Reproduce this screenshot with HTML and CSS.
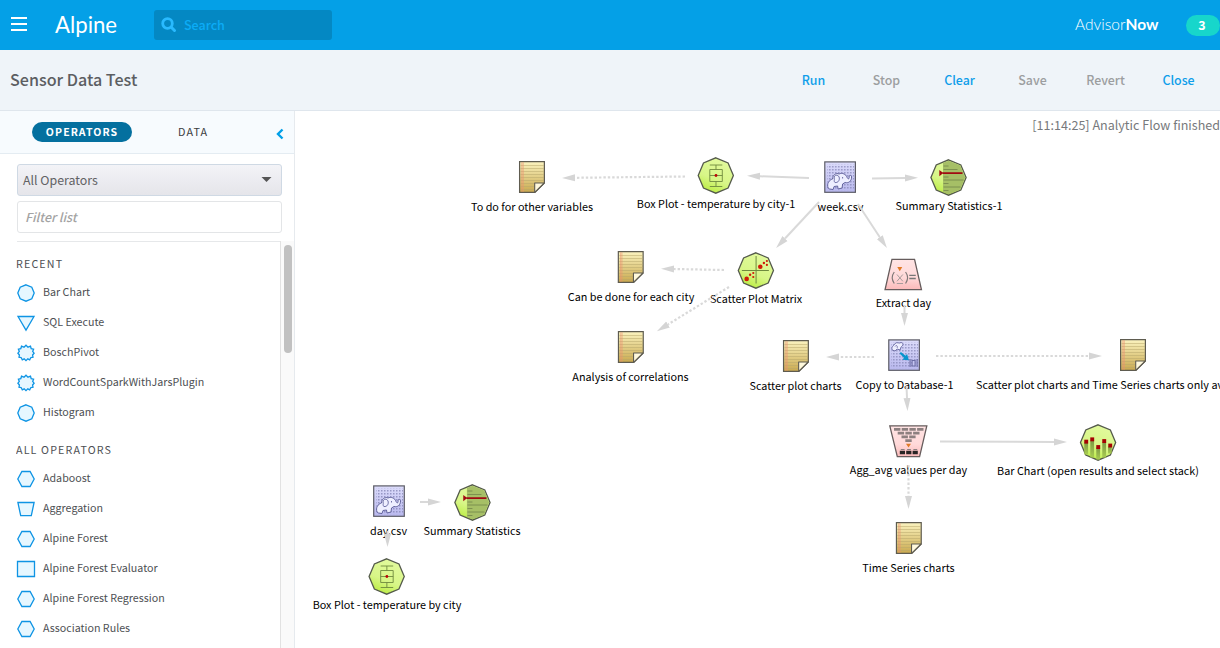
FILE: index.html
```html
<!DOCTYPE html>
<html lang="en">
<head>
<meta charset="utf-8">
<title>Sensor Data Test - Alpine</title>
<link rel="stylesheet" href="styles.css">
</head>
<body>
<svg class="defs" width="0" height="0" aria-hidden="true">
  <defs>
    <linearGradient id="gNote" x1="0" y1="0" x2="0" y2="1"><stop offset="0" stop-color="#fbf3bf"/><stop offset="1" stop-color="#c9a94f"/></linearGradient>
    <linearGradient id="gGreen" x1="0.7" y1="0" x2="0.3" y2="1"><stop offset="0" stop-color="#e2fa9e"/><stop offset=".6" stop-color="#d8f688"/><stop offset="1" stop-color="#b9ec3e"/></linearGradient>
    <linearGradient id="gBlue" x1="0" y1="0" x2="0" y2="1"><stop offset="0" stop-color="#dcdcfb"/><stop offset="1" stop-color="#b9b8ee"/></linearGradient>
    <linearGradient id="gPink" x1="0" y1="0" x2="0" y2="1"><stop offset="0" stop-color="#ffe4e4"/><stop offset=".6" stop-color="#ffd9d9"/><stop offset="1" stop-color="#fbb9b9"/></linearGradient>
    <linearGradient id="gBar" x1="0" y1="0" x2="0" y2="1"><stop offset="0" stop-color="#7d9a45"/><stop offset="1" stop-color="#a8cc50"/></linearGradient>
    <pattern id="dots" width="3" height="3" patternUnits="userSpaceOnUse"><rect width="1.5" height="1.5" fill="#8384b4"/></pattern>
    <marker id="head" markerUnits="userSpaceOnUse" markerWidth="13" markerHeight="8" refX="0" refY="4" orient="auto"><path d="M0 .5L13 4L0 7.5Z" fill="#d5d5d5"/></marker>
  </defs>
  <symbol id="octagon" viewBox="0 0 40 40"><path d="M20 2.3L32.3 7.4L37.6 20L32.3 32.5L20 37.7L7.7 32.5L2.4 20L7.7 7.4Z" fill="url(#gGreen)" stroke="#555b4c" stroke-width="1.3"/></symbol>
  <symbol id="note" viewBox="0 0 40 40">
    <path d="M7.6 4.6H32.4V26L23 35.4H7.6Z" fill="url(#gNote)" stroke="#5f5c50" stroke-width="1.2"/>
    <path d="M8.5 8.5H31.8M8.5 11.5H31.8M8.5 14.5H31.8M8.5 17.5H31.8M8.5 20.5H31.8M8.5 23.5H31.8M8.5 26.5H22M8.5 29.5H22M8.5 32.5H22" stroke="#b7a76b" stroke-width=".5"/>
    <path d="M9.9 5.2V34.8M11.2 5.2V34.8" stroke="#ee9070" stroke-width=".6"/>
    <path d="M22.7 35.3V26H32.3Z" fill="#fff9dc" stroke="#5f5c50" stroke-width="1.1" stroke-linejoin="round"/>
  </symbol>
  <symbol id="boxplot" viewBox="0 0 40 40"><use href="#octagon"/>
    <path d="M14 9.5H26.500M20.200 9.500V14M14 14H26.500V26H14ZM14 20H26.500M20.200 26V31M14 31H26.500" fill="none" stroke="#6f8a3e" stroke-width=".9"/><circle cx="20.2" cy="20" r="1.4" fill="#b90707"/></symbol>
  <symbol id="summary" viewBox="0 0 40 40"><use href="#octagon"/>
    <path d="M14.500 5.500L20 3.200L31.800 8L36.600 20L31.800 32L20 36.800L14.500 34.500Z" fill="#a6bf66"/>
    <path d="M15 8.500H20M15 12H29M15 19.500H20M15 22.500H35M15 26H20M15 29.500H32M15 33H20" stroke="#728549" stroke-width=".8"/>
    <path d="M14 15.600H34" stroke="#a10b12" stroke-width="1.900"/><path d="M10.800 12.500L14.800 15.600L10.800 18.700Z" fill="#a10b12"/></symbol>
  <symbol id="scatter" viewBox="0 0 40 40"><use href="#octagon"/>
    <path d="M20.200 5.500V33M6 20H33" stroke="#6f8a3e" stroke-width="1"/>
    <g fill="#cf1c08"><circle cx="24.4" cy="16.2" r="2.3"/><circle cx="28" cy="12.500" r="1.2"/><circle cx="31" cy="10.500" r="1.1"/><circle cx="31" cy="14.4" r="1.1"/><circle cx="10.8" cy="28.4" r="2.3"/><circle cx="14.2" cy="24.3" r="1.2"/><circle cx="17.4" cy="22.500" r="1.1"/><circle cx="17.4" cy="26.500" r="1.1"/></g></symbol>
  <symbol id="bars" viewBox="0 0 40 40"><use href="#octagon"/>
    <g fill="url(#gBar)"><rect x="6.2" y="20" width="3.8" height="12"/><rect x="12.2" y="18" width="3.8" height="17"/><rect x="18.2" y="25" width="3.8" height="12"/><rect x="24.2" y="20" width="3.8" height="15"/><rect x="30" y="24" width="3.6" height="7"/></g>
    <g fill="#a50303"><rect x="6.2" y="17.2" width="3.9" height="3.9"/><rect x="12.2" y="14.9" width="3.9" height="3.9"/><rect x="18.2" y="22.6" width="3.9" height="3.9"/><rect x="24.2" y="16.6" width="3.9" height="3.9"/><rect x="30.2" y="21.1" width="3.9" height="3.9"/></g></symbol>
  <symbol id="hadoop" viewBox="0 0 40 40">
    <rect x="4.7" y="4.9" width="30.6" height="30.4" fill="url(#gBlue)" stroke="#5c5c66" stroke-width="1.2"/><rect x="7" y="7.500" width="27" height="25.600" fill="url(#dots)" opacity=".75"/>
    <path d="M8 31C6.500 26.500 9 23 12.500 22C12.500 18 16 15.500 19 17C22 15.500 26 17 27 20.500C28 22.500 29.500 22 29 20C28.500 18 31.500 17.500 31.500 20C31.500 24 28.500 26.500 25 25.500L22.500 27L22 31L18 32L17.500 29L14 29.500L13 32.500L9.500 32Z" fill="#eeefff" stroke="#62639d" stroke-width="1"/>
    <path d="M14 21C14 17.500 18 17.500 19 20C20 23 18 26 15 25.500C13 24.500 15 23 14 21ZM22.500 20V21.500" fill="none" stroke="#62639d" stroke-width=".9"/></symbol>
  <symbol id="copydb" viewBox="0 0 40 40">
    <rect x="4.7" y="4.9" width="30.6" height="30.4" fill="url(#gBlue)" stroke="#5c5c66" stroke-width="1.2"/><rect x="7" y="7.500" width="27" height="25.600" fill="url(#dots)" opacity=".75"/>
    <path d="M8 15C7 11 10 11 11 8.500C13 6.500 15 9 17 7.500C20 8 19 10.500 17 12L16 15L13 14L11 16Z" fill="#eeefff" stroke="#62639d" stroke-width=".9"/><path d="M11 11.500C12 9.500 14 11 13 13" fill="none" stroke="#62639d" stroke-width=".8"/>
    <path d="M15.500 18.600L16.800 17L21.500 20.800L23 19L24.800 25.200L18.400 24.800L19.900 22.800Z" fill="#0795cd"/>
    <path d="M26 24V32M33 24V32M28 25.500H31V31H28Z" stroke="#6b6ca4" fill="#c5c5f1" stroke-width="1.1"/></symbol>
  <symbol id="extract" viewBox="0 0 40 40">
    <path d="M8.700 4.800H31.300L38.200 35.200H1.800Z" fill="url(#gPink)" stroke="#665c5c" stroke-width="1.300"/>
    <path d="M14 12.500H19L16.500 16.700Z" fill="#e17a25"/>
    <path d="M11 17.500Q7 23 11 29M22.300 17.500Q26.300 23 22.300 29" fill="none" stroke="#807878" stroke-width="1.200"/>
    <path d="M13.700 20L19.600 26.800M19.600 20L13.700 26.800M13.500 29H19.800" stroke="#a89c9c" stroke-width="1"/>
    <path d="M26 20.800H32.500M26 24H32.500" stroke="#777" stroke-width="1.300"/></symbol>
  <symbol id="aggregate" viewBox="0 0 40 40">
    <path d="M1.500 4.300H38.500L31.300 35.200H9Z" fill="url(#gPink)" stroke="#665c5c" stroke-width="1.300"/>
    <path d="M5.700 7.800H35.300" stroke="#8d8080" stroke-width="2.700" stroke-dasharray="6.400 1.300"/><path d="M9.400 11.600H31.200" stroke="#8d8080" stroke-width="2.700" stroke-dasharray="6.400 1.300"/><path d="M13.200 15.400H27.300" stroke="#8d8080" stroke-width="2.700" stroke-dasharray="6.400 1.300"/><path d="M17 19.200H23.400" stroke="#8d8080" stroke-width="2.700"/>
    <path d="M17.700 22.200H22.700L20.200 26Z" fill="#e17a25"/><path d="M11.500 31H29.500" stroke="#292525" stroke-width="3.600" stroke-dasharray="5.200 1.200"/><path d="M12.500 28H29" stroke="#8d8080" stroke-width="1" stroke-dasharray="3.800 2.500"/></symbol>
  <symbol id="s-octagon" viewBox="0 0 20 20"><path d="M10 1.800L15.800 4.200L18.200 10L15.800 15.800L10 18.200L4.200 15.800L1.800 10L4.200 4.200Z"/></symbol>
  <symbol id="s-triangle" viewBox="0 0 20 20"><path d="M2 3.500H18L10 17.200Z"/></symbol>
  <symbol id="s-gear" viewBox="0 0 20 20"><path d="M10 2.200L12 4.200L14.500 3.200L15.200 5.600L17.600 6.200L16.700 8.500L18.100 10.200L16.600 12L17 14.200L14.700 14.700L13.700 16.900L11.800 15.900L10 17.600L8.200 15.900L6.300 16.900L5.300 14.700L3 14.200L3.400 12L1.900 10.200L3.300 8.500L2.400 6.200L4.800 5.600L5.500 3.200L8 4.200Z"/></symbol>
  <symbol id="s-hexagon" viewBox="0 0 20 20"><path d="M5.900 2.500H14.100L18.200 10L14.100 17.500H5.900L1.800 10Z"/></symbol>
  <symbol id="s-trapezoid" viewBox="0 0 20 20"><path d="M1.900 3.500H18.100L15.300 16.700H4.700Z"/></symbol>
  <symbol id="s-square" viewBox="0 0 20 20"><path d="M1.500 2.500H18.500V17.500H1.500Z"/></symbol>
</svg>

<header class="topbar">
  <svg class="burger" viewBox="0 0 16 14"><path d="M0 1H16M0 7H16M0 13H16" stroke="#fff" stroke-width="2"/></svg>
  <span class="logo">Alpine</span>
  <div class="search">
    <svg viewBox="0 0 16 16"><circle cx="6.500" cy="6.500" r="4.800" fill="none" stroke="#29baff" stroke-width="2.800"/><path d="M10.300 10.300L13.500 13.500" stroke="#29baff" stroke-width="3" stroke-linecap="round"/></svg>
    <span>Search</span>
  </div>
  <span class="product">Advisor<b>Now</b></span>
  <span class="count">3</span>
</header>

<div class="titlebar">
  <h1>Sensor Data Test</h1>
  <nav class="actions"><a>Run</a><a class="off">Stop</a><a>Clear</a><a class="off">Save</a><a class="off">Revert</a><a>Close</a></nav>
</div>

<div class="main">
  <aside class="sidebar">
    <div class="tabs">
      <span class="tab active">OPERATORS</span><span class="tab">DATA</span>
      <svg class="collapse" viewBox="0 0 8 12"><path d="M6.500 1.500L2 6L6.500 10.500" fill="none" stroke="#009fe8" stroke-width="2.400"/></svg>
    </div>
    <div class="filters">
      <div class="select"><span>All Operators</span><svg viewBox="0 0 10 5"><path d="M0 0H10L5 5Z" fill="#555"/></svg></div>
      <div class="filter">Filter list</div>
    </div>
    <div class="scroller">
      <div class="list">
        <h2>RECENT</h2>
        <ul>
          <li><svg><use href="#s-octagon"/></svg>Bar Chart</li>
          <li><svg><use href="#s-triangle"/></svg>SQL Execute</li>
          <li><svg><use href="#s-gear"/></svg>BoschPivot</li>
          <li><svg><use href="#s-gear"/></svg>WordCountSparkWithJarsPlugin</li>
          <li><svg><use href="#s-octagon"/></svg>Histogram</li>
        </ul>
        <h2>ALL OPERATORS</h2>
        <ul>
          <li><svg><use href="#s-hexagon"/></svg>Adaboost</li>
          <li><svg><use href="#s-trapezoid"/></svg>Aggregation</li>
          <li><svg><use href="#s-hexagon"/></svg>Alpine Forest</li>
          <li><svg><use href="#s-square"/></svg>Alpine Forest Evaluator</li>
          <li><svg><use href="#s-hexagon"/></svg>Alpine Forest Regression</li>
          <li><svg><use href="#s-hexagon"/></svg>Association Rules</li>
        </ul>
      </div>
      <div class="track"><div class="thumb"></div></div>
    </div>
  </aside>

  <main class="canvas">
    <p class="status">[11:14:25] Analytic Flow finished</p>
    <div class="node paper n-todo"><svg><use href="#note"/></svg><span>To do for other variables</span></div>
    <div class="node n-box1"><svg><use href="#boxplot"/></svg><span>Box Plot - temperature by city-1</span></div>
    <div class="node paper n-week"><svg><use href="#hadoop"/></svg><span>week.csv</span></div>
    <div class="node n-sum1"><svg><use href="#summary"/></svg><span>Summary Statistics-1</span></div>
    <div class="node paper n-city"><svg><use href="#note"/></svg><span>Can be done for each city</span></div>
    <div class="node n-scatter"><svg><use href="#scatter"/></svg><span>Scatter Plot Matrix</span></div>
    <div class="node n-extract"><svg><use href="#extract"/></svg><span>Extract day</span></div>
    <div class="node paper n-corr"><svg><use href="#note"/></svg><span>Analysis of correlations</span></div>
    <div class="node paper n-charts"><svg><use href="#note"/></svg><span>Scatter plot charts</span></div>
    <div class="node paper n-copy"><svg><use href="#copydb"/></svg><span>Copy to Database-1</span></div>
    <div class="node paper n-series"><svg><use href="#note"/></svg><span>Scatter plot charts and Time Series charts only av</span></div>
    <div class="node n-agg"><svg><use href="#aggregate"/></svg><span>Agg_avg values per day</span></div>
    <div class="node n-bar"><svg><use href="#bars"/></svg><span>Bar Chart (open results and select stack)</span></div>
    <div class="node paper n-time"><svg><use href="#note"/></svg><span>Time Series charts</span></div>
    <div class="node paper n-day"><svg><use href="#hadoop"/></svg><span>day.csv</span></div>
    <div class="node n-sum"><svg><use href="#summary"/></svg><span>Summary Statistics</span></div>
    <div class="node n-box"><svg><use href="#boxplot"/></svg><span>Box Plot - temperature by city</span></div>
    <svg class="edges" viewBox="295 111 925 537">
      <g class="solid">
        <path d="M809 178L760 176.300"/><path d="M872 178.500L905 178"/><path d="M819 202L785 238.500"/><path d="M858 204L879.800 237.200"/>
        <path d="M904.500 305V313"/><path d="M906.500 386L907 398"/><path d="M940 441.600L1054 442"/><path d="M420 502H428"/><path d="M387.500 531V534"/>
      </g>
      <g class="dotted">
        <path d="M685 176.500L575 177.800"/><path d="M724 270L674 269"/><path d="M729 287L668 324.400"/><path d="M874 357H839"/><path d="M936 356H1089"/><path d="M908.500 465V496"/>
      </g>
    </svg>
  </main>
</div>
</body>
</html>
```
FILE: styles.css
```css
* { box-sizing: border-box; }
body { margin: 0; width: 1220px; height: 648px; overflow: hidden; display: flex; flex-direction: column; background: #fff; color: #4d4f53; font-family: "Noto Sans CJK SC", "Noto Sans", sans-serif; }
h1, h2, p, ul { margin: 0; padding: 0; font-weight: 400; list-style: none; }
.defs { position: absolute; }

.topbar { height: 50px; flex: none; display: flex; align-items: center; background: #04a0e7; color: #fff; padding-left: 11px; overflow: hidden; }
.burger { width: 16px; height: 14px; margin-top: -2px; }
.logo { font: 22.200px/30px Lato, sans-serif; width: 99px; margin-left: 28px; margin-top: -1px; }
.search { width: 178px; height: 30px; border-radius: 3px; background: #0488c3; display: flex; align-items: center; padding-left: 7px; gap: 7px; color: #0cacf6; font-size: 12.500px; font-weight: 500; line-height: 30px; }
.search svg { width: 16px; height: 16px; }
.product { margin-left: auto; width: 111px; font: 300 15.500px/20px Lato, sans-serif; margin-top: -3px; }
.product b { font-weight: 700; }
.count { width: 34px; height: 21px; border-radius: 11px; background: #17d6cb; font-size: 12.500px; font-weight: 700; line-height: 20px; text-align: center; padding-right: 2px; }

.titlebar { height: 61px; flex: none; display: flex; align-items: center; justify-content: space-between; background: #eff4f9; border-bottom: 1px solid #dfe6ed; padding: 0 5px 0 10px; }
h1 { font-size: 16.100px; line-height: 20px; color: #5c5e62; font-weight: 500; margin-top: -2px; }
.actions { display: grid; grid-template-columns: repeat(6, 73px); text-align: center; font-size: 12.400px; font-weight: 500; line-height: 20px; color: #0f9eea; }
.actions .off { color: #9c9ea0; }

.main { flex: 1; display: flex; min-height: 0; }
.sidebar { width: 295px; flex: none; border-right: 1px solid #e6eaee; display: flex; flex-direction: column; }
.tabs { height: 43px; flex: none; display: flex; align-items: center; background: #f7fbfe; border-bottom: 1px solid #e4ecf2; padding-left: 32px; }
.tab { font-size: 10.800px; line-height: 20px; letter-spacing: 1.100px; color: #3d3d3f; height: 22px; }
.tab.active { width: 100px; height: 20px; border-radius: 10px; background: #04709f; color: #fff; font-size: 10.500px; line-height: 19px; font-weight: 700; text-align: center; margin-right: 46px; }
.collapse { width: 8px; height: 12px; margin: 4px 10px 0 auto; }
.filters { flex: none; margin: 10px 12px 0 17px; display: flex; flex-direction: column; gap: 5px; }
.select, .filter { height: 32px; border-radius: 3px; font-size: 12.400px; line-height: 30px; }
.select { display: flex; align-items: center; justify-content: space-between; border: 1px solid #cfd9e4; background: linear-gradient(#f3f3f7, #e5e5ea); padding: 0 9px 0 5px; color: #626264; }
.select svg { width: 11px; height: 5px; margin-top: -2px; }
.filter { border: 1px solid #e3e5e7; padding-left: 7px; color: #a3a3a3; font-style: italic; font-weight: 500; }
.scroller { flex: 1; min-height: 0; margin: 8px 0 0 17px; display: flex; }
.list { width: 263px; border-top: 1px solid #e6e8ea; }
.list h2 { font-size: 10.700px; line-height: 20px; letter-spacing: 1.150px; height: 20px; margin: 12px 0 0 -1px; }
.list ul + h2 { margin-top: 13px; }
.list ul { padding-top: 3px; }
.list li { height: 30px; display: flex; align-items: center; gap: 7px; font-size: 10.700px; line-height: 28px; white-space: nowrap; margin-left: -1px; }
.list li svg { width: 20px; height: 20px; margin-top: 2px; fill: #e6f7ff; stroke: #0e94e4; stroke-width: 1.300; }
.scroller { overflow: hidden; margin-left: 16px; padding-left: 1px; }
.track { flex: 1; border-left: 1px solid #e2e2e2; background: #fafafa; padding: 4px 0 0 3px; }
.thumb { width: 8px; height: 108px; border-radius: 4px; background: #c1c1c1; }

.canvas { flex: 1; position: relative; overflow: hidden; }
.status { padding-top: 4px; text-align: right; font-size: 12.550px; line-height: 20px; color: #77797c; }
.node { position: absolute; display: flex; flex-direction: column; align-items: center; transform: translateX(-50%); color: #000; font-size: 10.820px; line-height: 14px; white-space: nowrap; }
.node svg { width: 40px; height: 40px; }
.node.paper span { padding-top: 2px; }
.node:not(.paper) svg { transform: translateY(-.5px); }
.edges { position: absolute; left: 0; top: 0; width: 925px; height: 537px; }
.edges path { fill: none; stroke: #d9d9d9; stroke-width: 2; marker-end: url(#head); }
.edges .dotted path { stroke-width: 2.200; stroke-dasharray: 2.400 2; }

.n-todo { left: 237px; top: 46px; }
.n-box1 { left: 421px; top: 45px; }
.n-week { left: 545.500px; top: 46px; }
.n-sum1 { left: 654px; top: 47px; }
.n-city { left: 336px; top: 136px; }
.n-scatter { left: 461px; top: 140px; }
.n-extract { left: 608.500px; top: 144px; }
.n-corr { left: 335.500px; top: 216px; }
.n-charts { left: 500.500px; top: 225px; }
.n-copy { left: 609.500px; top: 224px; }
.n-series { left: 681px; top: 224px; align-items: flex-start; transform: none; }
.n-series svg { margin-left: 137px; }
.n-agg { left: 613.500px; top: 311px; }
.n-bar { left: 803px; top: 312px; }
.n-time { left: 613.500px; top: 407px; }
.n-day { left: 93.500px; top: 370px; }
.n-sum { left: 177px; top: 372px; }
.n-box { left: 92px; top: 446px; }
```
